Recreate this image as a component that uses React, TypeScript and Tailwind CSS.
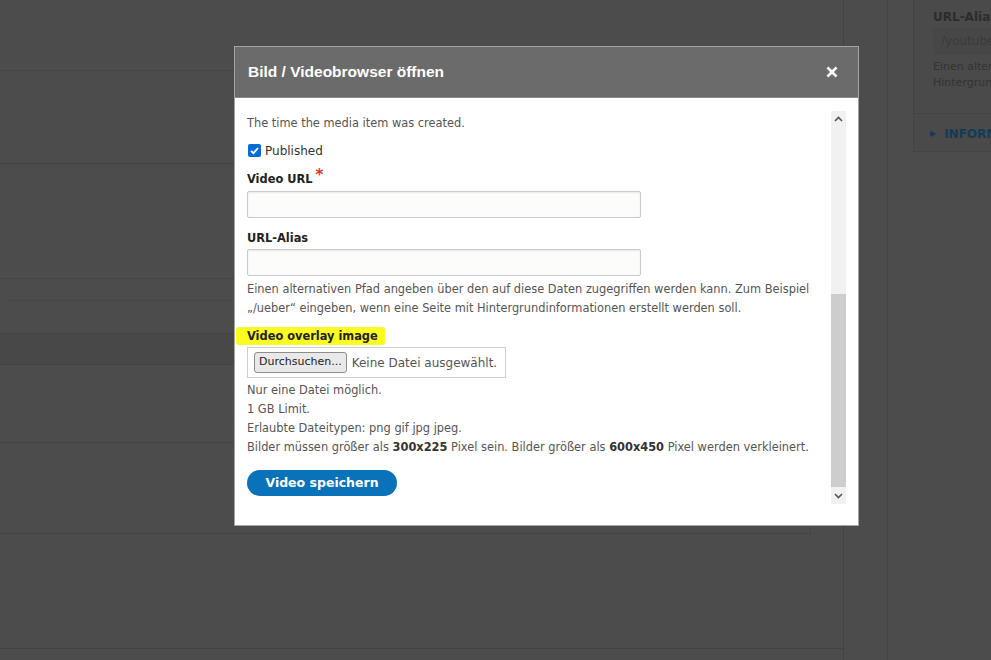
import React from 'react';

const bodyFont = { fontFamily: '"DejaVu Sans", Verdana, sans-serif' };

function Chevron({ up }: { up?: boolean }) {
  return (
    <svg width="9" height="6" viewBox="0 0 9 6" className="block">
      <path
        d={up ? 'M1 5 L4.5 1.5 L8 5' : 'M1 1 L4.5 4.5 L8 1'}
        fill="none"
        stroke="#555"
        strokeWidth="1.6"
      />
    </svg>
  );
}

function TextInput() {
  return (
    <div className="h-[27px] w-[394px] rounded-[2px] border border-[#cacaca] bg-[#fcfcfa] shadow-[inset_0_1px_2px_rgba(0,0,0,0.08)]" />
  );
}

function Background() {
  return (
    <div className="flex h-[660px] w-[991px] overflow-hidden bg-[#4c4c4c]" style={bodyFont}>
      {/* main column */}
      <div className="flex w-[844px] shrink-0 flex-col border-r border-[#434343]">
        <div className="h-[71px] border-b border-[#434343]" />
        <div className="h-[93px] border-b border-[#434343]" />
        <div className="h-[115px] border-b border-[#434343]" />
        <div className="flex h-[54px] flex-col pt-[21px]">
          <div className="mx-[4px] h-[33px] border-t border-[#474747]" />
        </div>
        <div className="h-[32px] border-y border-[#444] bg-[#484848]" />
        <div className="h-[78px] border-b border-[#434343]" />
        <div className="h-[91px] w-[811px] border-r border-b border-[#444]" />
        <div className="h-[115px] border-b border-[#434343]" />
      </div>
      <div className="w-[44px] shrink-0 border-r border-[#444]" />
      {/* sidebar */}
      <div className="min-w-0 flex-1 overflow-hidden pl-[25px]">
        <div className="h-[152px] border-b border-l border-[#444] bg-[#4a4a4a]">
          <div className="h-[114px] border-b border-[#444] pl-[19px] pt-[9px] text-[12px] leading-[16px] text-[#2c2c2c]">
            <div className="whitespace-nowrap font-bold">URL-Alias</div>
            <div className="mt-[3px] h-[27px] whitespace-nowrap bg-[#474747] pl-[8px] pt-[5px] text-[#3a3a3a]">
              /youtube
            </div>
            <div className="mt-[4px] whitespace-nowrap text-[11px] text-[#333]">Einen altern</div>
            <div className="whitespace-nowrap text-[11px] text-[#333]">Hintergrun</div>
          </div>
          <div className="flex items-center gap-[8px] whitespace-nowrap pl-[16px] pt-[11px] text-[12px] font-bold text-[#123b58]">
            <span className="text-[8px]">▶</span>
            <span>INFORM</span>
          </div>
        </div>
      </div>
    </div>
  );
}

function Modal() {
  return (
    <div
      className="absolute left-[234px] top-[46px] flex h-[480px] w-[625px] flex-col border border-[#a3a3a3] bg-white"
      style={bodyFont}
    >
      <div
        className="flex h-[51px] shrink-0 items-center justify-between border-b border-[#8a8a8a] bg-[#6b6b6b] pl-[13px] pr-[20px] text-white"
        style={{ fontFamily: '"Liberation Sans", Arial, sans-serif' }}
      >
        <span className="text-[15.5px] font-bold">Bild / Videobrowser öffnen</span>
        <svg width="12" height="12" viewBox="0 0 12 12">
          <path d="M1.5 1.5 L10.5 10.5 M10.5 1.5 L1.5 10.5" stroke="white" strokeWidth="2.6" />
        </svg>
      </div>
      <div className="flex flex-1">
        <div className="flex-1 pl-[12px] pt-[16px]">
          <p className="text-[11.4px] leading-[19px] text-[#555]">The time the media item was created.</p>
          <div className="mt-[8px] flex h-[19px] items-center gap-[4px]">
            <svg width="13" height="13" viewBox="0 0 13 13" className="ml-[1px]">
              <rect width="13" height="13" rx="2" fill="#0b6bd6" />
              <path d="M3 6.8 L5.4 9.2 L10 4" fill="none" stroke="white" strokeWidth="1.8" />
            </svg>
            <span className="text-[12px] text-[#333]">Published</span>
          </div>
          <div className="mt-[9px] text-[11.4px] font-bold leading-[19px] text-[#222]">
            Video URL
            <span className="relative -top-[3px] ml-[3px] text-[15px] font-bold text-[#e4312b]">*</span>
          </div>
          <div className="mt-[2px]">
            <TextInput />
          </div>
          <div className="mt-[11px] text-[11.4px] font-bold leading-[19px] text-[#222]">URL-Alias</div>
          <div className="mt-[1px]">
            <TextInput />
          </div>
          <p className="mt-[4px] whitespace-nowrap text-[11.4px] leading-[19px] text-[#555]">
            Einen alternativen Pfad angeben über den auf diese Daten zugegriffen werden kann. Zum Beispiel
            <br />
            „/ueber“ eingeben, wenn eine Seite mit Hintergrundinformationen erstellt werden soll.
          </p>
          <div className="mt-[9px] text-[11.4px] font-bold leading-[19px] text-[#222]">
            <span className="-ml-[11px] rounded-[3px] bg-[#fbfb22] py-[2px] pl-[11px] pr-[7px]">
              Video overlay image
            </span>
          </div>
          <div className="mt-[1px] flex h-[31px] w-[259px] items-center gap-[5px] whitespace-nowrap border border-[#cfcfcf] pl-[6px]">
            <span className="flex h-[21px] items-center rounded-[3px] border border-[#8d8d8d] bg-[#e9e9e9] px-[4px] text-[11px] text-[#222]">
              Durchsuchen...
            </span>
            <span className="text-[12px] text-[#555]">Keine Datei ausgewählt.</span>
          </div>
          <div className="mt-[3px] whitespace-nowrap text-[11.4px] leading-[19px] text-[#555]">
            <div>Nur eine Datei möglich.</div>
            <div>1 GB Limit.</div>
            <div>Erlaubte Dateitypen: png gif jpg jpeg.</div>
            <div>
              Bilder müssen größer als <b className="text-[#333]">300x225</b> Pixel sein. Bilder größer als{' '}
              <b className="text-[#333]">600x450</b> Pixel werden verkleinert.
            </div>
          </div>
          <button className="mt-[13px] flex h-[26px] w-[150px] items-center justify-center rounded-full bg-[#0a72b9] text-[12.5px] font-bold text-white">
            Video speichern
          </button>
        </div>
        {/* scrollbar */}
        <div className="mr-[12px] mt-[13px] flex h-[393px] w-[15px] flex-col bg-[#f1f1f1]">
          <div className="flex h-[15px] items-center justify-center">
            <Chevron up />
          </div>
          <div className="flex-1" />
          <div className="h-[193px] bg-[#cdcdcd]" />
          <div className="flex h-[17px] items-center justify-center">
            <Chevron />
          </div>
        </div>
      </div>
    </div>
  );
}

export default function App() {
  return (
    <div className="relative h-[660px] w-[991px] overflow-hidden">
      <Background />
      <Modal />
    </div>
  );
}
